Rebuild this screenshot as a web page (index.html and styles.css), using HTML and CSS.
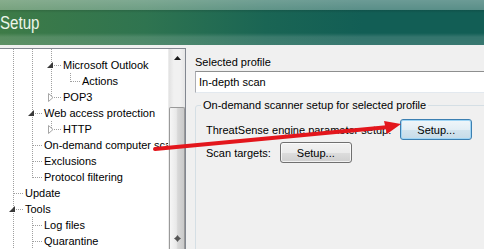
FILE: index.html
```html
<!DOCTYPE html>
<html lang="en">
<head>
  <meta charset="UTF-8" />
  <title>Setup</title>
  <link rel="stylesheet" href="styles.css">
</head>
<body>

  <header class="titlebar">
    <span class="title">Setup</span>
  </header>

  <div class="content">
    <div class="tree-pane">
      <ul class="tree">
        <li class="row row-top"><i class="g pipe"></i><i class="g pipe"></i><i class="g pipe"></i></li>
        <li class="row"><i class="g pipe"></i><i class="g pipe"></i><i class="g tee"><svg class="exp" width="6" height="6" viewBox="0 0 6 6"><path d="M6 0V6H0Z" fill="#3a3a3a"/></svg></i><span>Microsoft Outlook</span></li>
        <li class="row"><i class="g pipe"></i><i class="g pipe"></i><i class="g pipe"></i><i class="g elbow"></i><span>Actions</span></li>
        <li class="row"><i class="g pipe"></i><i class="g pipe"></i><i class="g elbow"><svg class="col" width="6" height="9" viewBox="0 0 6 9"><path d="M0.5 0.5L5 4.5L0.5 8.5Z" fill="#fff" stroke="#a6a6a6"/></svg></i><span>POP3</span></li>
        <li class="row"><i class="g pipe"></i><i class="g tee"><svg class="exp" width="6" height="6" viewBox="0 0 6 6"><path d="M6 0V6H0Z" fill="#3a3a3a"/></svg></i><span>Web access protection</span></li>
        <li class="row"><i class="g pipe"></i><i class="g pipe"></i><i class="g elbow"><svg class="col" width="6" height="9" viewBox="0 0 6 9"><path d="M0.5 0.5L5 4.5L0.5 8.5Z" fill="#fff" stroke="#a6a6a6"/></svg></i><span>HTTP</span></li>
        <li class="row"><i class="g pipe"></i><i class="g tee"></i><span>On-demand computer scan</span></li>
        <li class="row"><i class="g pipe"></i><i class="g tee"></i><span>Exclusions</span></li>
        <li class="row"><i class="g pipe"></i><i class="g elbow"></i><span>Protocol filtering</span></li>
        <li class="row"><i class="g tee"></i><span>Update</span></li>
        <li class="row"><i class="g tee"><svg class="exp" width="6" height="6" viewBox="0 0 6 6"><path d="M6 0V6H0Z" fill="#3a3a3a"/></svg></i><span>Tools</span></li>
        <li class="row"><i class="g pipe"></i><i class="g tee"></i><span>Log files</span></li>
        <li class="row"><i class="g pipe"></i><i class="g tee"></i><span>Quarantine</span></li>
      </ul>

      <div class="scrollbar">
        <div class="sb-up">
          <svg width="7" height="4" viewBox="0 0 7 4"><path d="M3.5 0L7 4H0Z" fill="#1a1a1a"/></svg>
        </div>
        <div class="sb-thumb">
          <svg width="7" height="7" viewBox="0 0 7 7"><path d="M3.5 0L5 2L7 3.5L5 5L3.5 7L2 5L0 3.5L2 2Z" fill="#555"/></svg>
        </div>
      </div>
    </div>

    <div class="settings">
      <div class="field-label">Selected profile</div>
      <div class="combo">In-depth scan</div>

      <fieldset class="group">
        <legend>On-demand scanner setup for selected profile</legend>
        <div class="setting-row">
          <span>ThreatSense engine parameter setup:</span>
          <button class="btn btn-focus">Setup...</button>
        </div>
        <div class="setting-row">
          <span>Scan targets:</span>
          <button class="btn">Setup...</button>
        </div>
      </fieldset>
    </div>
  </div>

  <!-- red callout arrow drawn over the dialog -->
  <svg class="callout" width="484" height="249" viewBox="0 0 484 249">
    <path d="M155 149L389 127" stroke="#e3161c" stroke-width="4" stroke-linecap="round"/>
    <path d="M401 124L384 121L387 134Z" fill="#e3161c"/>
  </svg>

</body>
</html>
```

FILE: styles.css
```css
* {
  margin: 0;
  padding: 0;
  box-sizing: border-box;
}
body {
  font-family: "Liberation Sans", Arial, sans-serif;
  font-size: 11px;
  color: #000;
  background: #f0f0f0;
  width: 484px;
  height: 249px;
  overflow: hidden;
  position: relative;
}
.titlebar {
  height: 45px;
  display: flex;
  align-items: center;
  background:
    linear-gradient(to bottom,
      rgba(255,255,255,.38) 0, rgba(255,255,255,.3) 10px,
      rgba(0,0,0,.12) 10px, rgba(0,0,0,0) 13px,
      rgba(0,0,0,0) 33px, rgba(255,255,255,.14) 37px, rgba(255,255,255,.16) 45px),
    linear-gradient(to right, #3e7b47 0, #2f7450 30%, #1a6554 55%, #125e55 75%, #125e55 100%);
}
.title {
  font-size: 18px;
  color: #eef6ea;
  margin-top: 1px;
  transform: scaleX(0.84);
  transform-origin: left center;
}
.content {
  display: flex;
  padding-top: 3px;
  height: 204px;
}
.tree-pane {
  flex: none;
  width: 186px;
  display: flex;
  background: #fff;
  border-top: 1px solid #828790;
  border-right: 1px solid #828790;
}
.tree {
  list-style: none;
  width: 168px;
  overflow: hidden;
}
.row {
  display: flex;
  align-items: center;
  height: 16px;
  padding-left: 5px;
  white-space: nowrap;
}
.row-top {
  height: 8px;
}
.row span {
  padding-left: 1px;
}
.g {
  flex: none;
  width: 19px;
  height: 100%;
  position: relative;
}
.pipe {
  background: repeating-linear-gradient(#a0a0a0 0 1px, transparent 1px 2px) 8px 0 / 1px 100% no-repeat;
}
.tee {
  background:
    repeating-linear-gradient(#a0a0a0 0 1px, transparent 1px 2px) 8px 0 / 1px 100% no-repeat,
    repeating-linear-gradient(90deg, #a0a0a0 0 1px, transparent 1px 2px) 9px 8px / 9px 1px no-repeat;
}
.elbow {
  background:
    repeating-linear-gradient(#a0a0a0 0 1px, transparent 1px 2px) 8px 0 / 1px 9px no-repeat,
    repeating-linear-gradient(90deg, #a0a0a0 0 1px, transparent 1px 2px) 9px 8px / 9px 1px no-repeat;
}
.exp {
  position: absolute;
  left: 4px;
  top: 5px;
}
.col {
  position: absolute;
  left: 5px;
  top: 4px;
}
.scrollbar {
  flex: none;
  width: 17px;
  display: flex;
  flex-direction: column;
  background: linear-gradient(to right, #e2e2e2, #f1f1f1 30%, #f1f1f1 70%, #e6e6e6);
  border-left: 1px solid #ececec;
}
.sb-up {
  height: 17px;
  display: flex;
  align-items: center;
  justify-content: center;
}
.sb-thumb {
  flex: 1;
  margin-top: 41px;
  display: flex;
  flex-direction: column;
  justify-content: flex-end;
  align-items: center;
  padding-bottom: 7px;
  border: 1px solid #9a9a9a;
  border-bottom: 0;
  border-radius: 2px 2px 0 0;
  background: linear-gradient(to right, #f6f6f6, #e9e9e9 45%, #d8d8d8 55%, #c9c9c9);
}
.settings {
  flex: none;
  width: 340px;
  padding: 8px 0 0 9px;
}
.field-label {
  line-height: 13px;
}
.combo {
  margin-top: 2px;
  height: 22px;
  line-height: 20px;
  padding-left: 3px;
  background: #fff;
  border: 1px solid #abadb3;
  border-top-color: #8e8f8f;
  border-bottom-color: #e3e9ef;
}
.group {
  margin-top: 6px;
  height: 160px;
  border: 1px solid #d5dfe5;
  border-radius: 3px;
  padding: 7px 10px 0;
}
.group legend {
  margin-left: -5px;
  padding: 0 2px;
  line-height: 13px;
}
.setting-row {
  display: flex;
  align-items: center;
  gap: 9px;
  height: 21px;
  margin-bottom: 2px;
}
.btn {
  flex: none;
  width: 72px;
  height: 21px;
  font-family: inherit;
  font-size: 11px;
  color: #000;
  border: 1px solid #707070;
  border-radius: 3px;
  background: linear-gradient(#f2f2f2 0, #ebebeb 50%, #dddddd 51%, #cfcfcf 100%);
  box-shadow: inset 0 0 0 1px rgba(255,255,255,.7);
}
.btn-focus {
  border-color: #3c7fb1;
  background: linear-gradient(#f0f6fa 0, #e3eef5 50%, #d3e4ee 51%, #c6dbe8 100%);
  box-shadow: inset 0 0 0 1px #9fd5f5;
}
.callout {
  position: absolute;
  top: 0;
  left: 0;
  pointer-events: none;
}
```
